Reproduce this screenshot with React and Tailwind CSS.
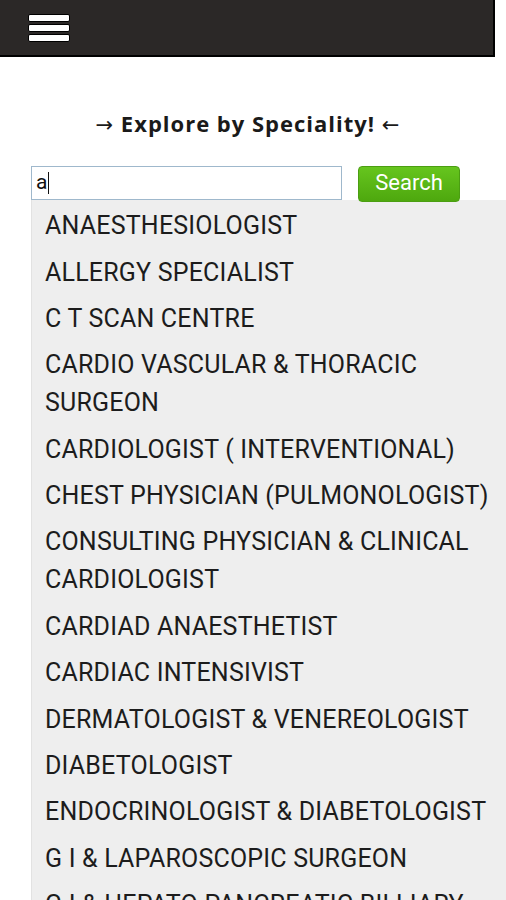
import React from 'react';

const items = [
  'ANAESTHESIOLOGIST',
  'ALLERGY SPECIALIST',
  'C T SCAN CENTRE',
  'CARDIO VASCULAR & THORACIC SURGEON',
  'CARDIOLOGIST ( INTERVENTIONAL)',
  'CHEST PHYSICIAN (PULMONOLOGIST)',
  'CONSULTING PHYSICIAN & CLINICAL CARDIOLOGIST',
  'CARDIAD ANAESTHETIST',
  'CARDIAC INTENSIVIST',
  'DERMATOLOGIST & VENEREOLOGIST',
  'DIABETOLOGIST',
  'ENDOCRINOLOGIST & DIABETOLOGIST',
  'G I & LAPAROSCOPIC SURGEON',
  'G I & HEPATO PANCREATIC BILLIARY SURGEON',
];

const Hamburger = () => (
  <div className="flex flex-col gap-[2px]">
    {[0, 1, 2].map((i) => (
      <div key={i} className="w-[42px] h-[8px] bg-white border border-black rounded-[2px]" />
    ))}
  </div>
);

export default function App() {
  return (
    <div className="w-[506px] h-[900px] overflow-hidden bg-white" style={{ fontFamily: 'Roboto, "Liberation Sans", sans-serif' }}>
      <div className="w-[495px] h-[57px] bg-[#2b2827] border-r-2 border-b-2 border-black flex items-center pl-[28px]">
        <Hamburger />
      </div>

      <h1 className="mt-[52px] h-[28px] text-center pr-[10px] text-[22px] tracking-[1px] font-bold text-[#1a1a1a] leading-[28px] font-['Open_Sans',sans-serif]">
        <span className="font-['DejaVu_Sans',sans-serif] font-normal text-[21px] leading-none">→</span> Explore by Speciality! <span className="font-['DejaVu_Sans',sans-serif] font-normal text-[21px] leading-none">←</span>
      </h1>

      <div className="mt-[29px] flex items-start pl-[31px] gap-[16px]">
        <div className="w-[311px] h-[34px] border border-[#9fb8cc] bg-white flex items-center pl-[4px] text-[21px] text-[#111]">
          a<span className="w-[1px] h-[22px] bg-[#111] ml-[1px]" />
        </div>
        <button className="w-[102px] h-[36px] rounded-[4px] bg-gradient-to-b from-[#66c51e] to-[#4ea80e] border border-[#4b9e12] text-white text-[22px] leading-none pb-[2px]">
          Search
        </button>
      </div>

      <ul className="-mt-[2px] ml-[31px] bg-[#eeeeee] border-l border-[#e2e2e2] pl-[13px] pr-[2px] pt-[3px] text-[25px] text-[#1c1c1c] tracking-[0.2px] leading-[38px]">
        {items.map((t) => (
          <li key={t} className="py-[4.2px]">{t}</li>
        ))}
      </ul>
    </div>
  );
}
